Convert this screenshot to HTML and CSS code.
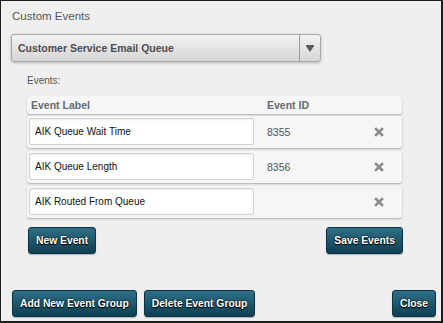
FILE: index.html
```html
<!DOCTYPE html>
<html>
<head>
<meta charset="utf-8">
<link rel="stylesheet" href="styles.css">
</head>
<body>
<div class="dialog">
  <h1 class="title">Custom Events</h1>
  <div class="select">
    <span class="select-label">Customer Service Email Queue</span>
    <span class="select-btn"><svg width="8" height="7" viewBox="0 0 8 7"><rect x="0" y="0" width="8" height="1.2" fill="#5a5a5a"/><polygon points="0,1 8,1 4,7" fill="#5a5a5a"/></svg></span>
  </div>
  <div class="events">
    <div class="events-label">Events:</div>
    <div class="grid">
      <div class="row head">
        <div class="cell-label">Event Label</div>
        <div class="cell-id">Event ID</div>
        <div class="cell-x"></div>
      </div>
      <div class="row">
        <input class="cell-input" type="text" value="AIK Queue Wait Time">
        <div class="cell-id">8355</div>
        <div class="cell-x"><svg class="x-icon" width="10" height="10" viewBox="0 0 10 10"><path d="M2 2 L8 8 M8 2 L2 8" stroke="#8c8c8c" stroke-width="2.6" stroke-linecap="square"/></svg></div>
      </div>
      <div class="row">
        <input class="cell-input" type="text" value="AIK Queue Length">
        <div class="cell-id">8356</div>
        <div class="cell-x"><svg class="x-icon" width="10" height="10" viewBox="0 0 10 10"><path d="M2 2 L8 8 M8 2 L2 8" stroke="#8c8c8c" stroke-width="2.6" stroke-linecap="square"/></svg></div>
      </div>
      <div class="row">
        <input class="cell-input" type="text" value="AIK Routed From Queue">
        <div class="cell-id"></div>
        <div class="cell-x"><svg class="x-icon" width="10" height="10" viewBox="0 0 10 10"><path d="M2 2 L8 8 M8 2 L2 8" stroke="#8c8c8c" stroke-width="2.6" stroke-linecap="square"/></svg></div>
      </div>
    </div>
    <div class="actions">
      <button class="btn">New Event</button>
      <button class="btn">Save Events</button>
    </div>
  </div>
  <div class="footer">
    <button class="btn">Add New Event Group</button>
    <button class="btn">Delete Event Group</button>
    <button class="btn btn-close">Close</button>
  </div>
</div>
</body>
</html>
```
FILE: styles.css
```css
html, body {
  margin: 0;
  padding: 0;
  background: #efefef;
}
.dialog {
  width: 443px;
  height: 323px;
  box-sizing: border-box;
  border: 1px solid #1c1c1c;
  border-right-width: 2px;
  border-bottom-width: 2px;
  background: #efefef;
  padding: 7px 5px 4px 10px;
  display: flex;
  flex-direction: column;
  font-family: "Liberation Sans", Arial, sans-serif;
}
.title {
  margin: 0 0 0 1px;
  font-size: 11.5px;
  line-height: 16px;
  font-weight: normal;
  color: #575757;
}
.select {
  margin-top: 10px;
  width: 310px;
  height: 28px;
  box-sizing: border-box;
  border: 1px solid #a9a9a9;
  border-radius: 3px;
  background: linear-gradient(#f3f3f3, #d5d5d5);
  box-shadow: 0 1px 3px rgba(0,0,0,0.25);
  display: flex;
  align-items: stretch;
}
.select-label {
  flex: 1;
  display: flex;
  align-items: center;
  padding-left: 6px;
  font-size: 10.5px;
  font-weight: bold;
  color: #4e4e4e;
}
.select-btn {
  width: 20px;
  border-left: 1px solid #9a9a9a;
  display: flex;
  align-items: center;
  justify-content: center;
}
.events {
  margin-left: 16px;
  width: 375px;
}
.events-label {
  margin-top: 11px;
  font-size: 10px;
  line-height: 15px;
  color: #575757;
}
.grid {
  margin-top: 8px;
  display: flex;
  flex-direction: column;
  gap: 3px;
}
.row {
  display: flex;
  align-items: center;
  height: 32px;
  box-sizing: border-box;
  padding: 2px 13px 3px 2px;
  background: #f6f6f6;
  border-radius: 3px;
  box-shadow: 0 1px 2px rgba(0,0,0,0.28);
}
.row.head {
  height: 18px;
  padding-top: 0;
  padding-bottom: 0;
  margin-bottom: -1px;
  border-radius: 4px 4px 3px 3px;
  font-weight: bold;
  font-size: 10.5px;
  color: #666a6e;
}
.cell-label {
  width: 225px;
  box-sizing: border-box;
  padding-left: 2px;
}
.cell-input {
  width: 225px;
  height: 27px;
  box-sizing: border-box;
  margin: 0;
  padding: 0 0 0 5px;
  border: 1px solid #d2d2d2;
  border-radius: 2px;
  background: #fff;
  box-shadow: inset 0 1px 2px rgba(0,0,0,0.08);
  font-family: "Liberation Sans", Arial, sans-serif;
  font-size: 10px;
  color: #111;
  outline: none;
}
.cell-id {
  flex: 1;
  margin-left: 13px;
  font-size: 10.5px;
  color: #555;
}
.head .cell-id {
  color: #666a6e;
}
.cell-x {
  width: 20px;
  display: flex;
  justify-content: center;
  align-items: center;
}
.x-icon {
  display: block;
}
.actions {
  margin-top: 9px;
  margin-left: 1px;
  margin-right: -1px;
  display: flex;
  justify-content: space-between;
}
.btn {
  height: 27px;
  box-sizing: border-box;
  margin: 0;
  padding: 0 7px;
  border: 1px solid #0c3445;
  border-radius: 3px;
  background: linear-gradient(#2f6f86, #0f3f53);
  box-shadow: 0 1px 1px rgba(0,0,0,0.25);
  color: #fff;
  font-family: "Liberation Sans", Arial, sans-serif;
  font-size: 10.3px;
  font-weight: bold;
  text-shadow: 0 0 2px #000, 0 1px 1px #000;
  cursor: pointer;
}
.footer {
  margin-top: auto;
  margin-left: 1px;
  display: flex;
  gap: 7px;
}
.btn-close {
  margin-left: auto;
}
```
